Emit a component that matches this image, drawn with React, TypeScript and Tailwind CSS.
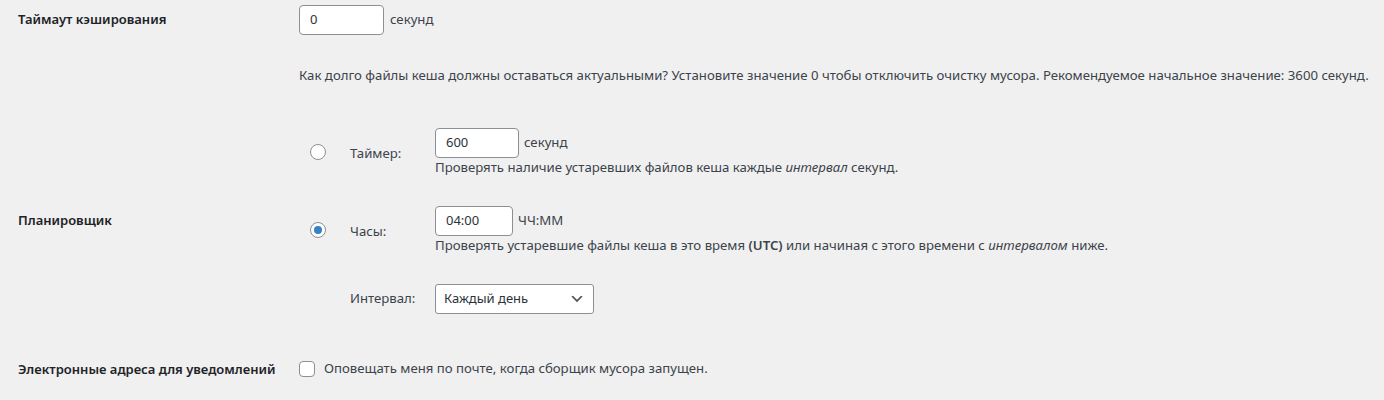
import React from 'react';

const font = { fontFamily: '"Noto Sans", "Open Sans", sans-serif' };

function TextBox({ value, width }: { value: string; width: string }) {
  return (
    <div
      className={`${width} h-[30px] flex items-center px-[10px] bg-white border border-[#8c8f94] rounded-[4px] text-[13px] text-[#2c3338]`}
    >
      {value}
    </div>
  );
}

function Radio({ checked }: { checked?: boolean }) {
  return (
    <span className="w-4 h-4 rounded-full border border-[#8c8f94] bg-white flex items-center justify-center">
      {checked && <span className="w-2 h-2 rounded-full bg-[#3582c4]" />}
    </span>
  );
}

export default function App() {
  return (
    <div style={font} className="min-h-[400px] bg-[#f0f0f1] pl-[18px] text-[13.2px] text-[#3c434a]">
      {/* Cache timeout */}
      <div className="grid grid-cols-[281px_1fr] pt-[5px]">
        <div className="h-[30px] flex items-center text-[13px] font-semibold text-[#1d2327]">
          Таймаут кэширования
        </div>
        <div>
          <div className="flex items-center gap-[6px]">
            <TextBox value="0" width="w-[85px]" />
            <span>секунд</span>
          </div>
          <p className="mt-[31px] leading-[18px]">
            Как долго файлы кеша должны оставаться актуальными? Установите значение 0 чтобы отключить очистку мусора.
            Рекомендуемое начальное значение: 3600 секунд.
          </p>
        </div>
      </div>

      {/* Scheduler */}
      <div className="grid grid-cols-[281px_1fr] items-center mt-[44px]">
        <div className="text-[13px] font-semibold text-[#1d2327]">Планировщик</div>
        <div className="grid grid-cols-[51px_85px_1fr] items-center">
          <div className="pl-[11px]">
            <Radio />
          </div>
          <div className="pt-[4px]">Таймер:</div>
          <div>
            <div className="flex items-center gap-[5px]">
              <TextBox value="600" width="w-[84px]" />
              <span>секунд</span>
            </div>
            <p className="leading-[18px]">
              Проверять наличие устаревших файлов кеша каждые <em>интервал</em> секунд.
            </p>
          </div>

          <div className="pl-[11px] mt-[30px]">
            <Radio checked />
          </div>
          <div className="pt-[4px] mt-[30px]">Часы:</div>
          <div className="mt-[30px]">
            <div className="flex items-center gap-[5px]">
              <TextBox value="04:00" width="w-[78px]" />
              <span>ЧЧ:ММ</span>
            </div>
            <p className="leading-[18px]">
              Проверять устаревшие файлы кеша в это время <strong className="font-semibold">(UTC)</strong> или начиная с
              этого времени с <em>интервалом</em> ниже.
            </p>
          </div>

          <div className="mt-[30px]" />
          <div className="mt-[30px]">Интервал:</div>
          <div className="mt-[30px]">
            <div className="w-[159px] h-[30px] flex items-center justify-between pl-[8px] pr-[8px] bg-white border border-[#8c8f94] rounded-[3px] text-[13px] text-[#2c3338]">
              <span>Каждый день</span>
              <svg width="16" height="16" viewBox="0 0 20 20">
                <path d="M5 6l5 5 5-5 2 1-7 7-7-7 2-1z" fill="#555" />
              </svg>
            </div>
          </div>
        </div>
      </div>

      {/* Notification emails */}
      <div className="grid grid-cols-[281px_1fr] items-center mt-[45px]">
        <div className="leading-[20px] text-[13px] font-semibold text-[#1d2327]">
          Электронные адреса для уведомлений
        </div>
        <label className="flex items-center gap-[9px]">
          <span className="w-4 h-4 bg-white border border-[#8c8f94] rounded-[4px]" />
          <span>Оповещать меня по почте, когда сборщик мусора запущен.</span>
        </label>
      </div>
    </div>
  );
}
